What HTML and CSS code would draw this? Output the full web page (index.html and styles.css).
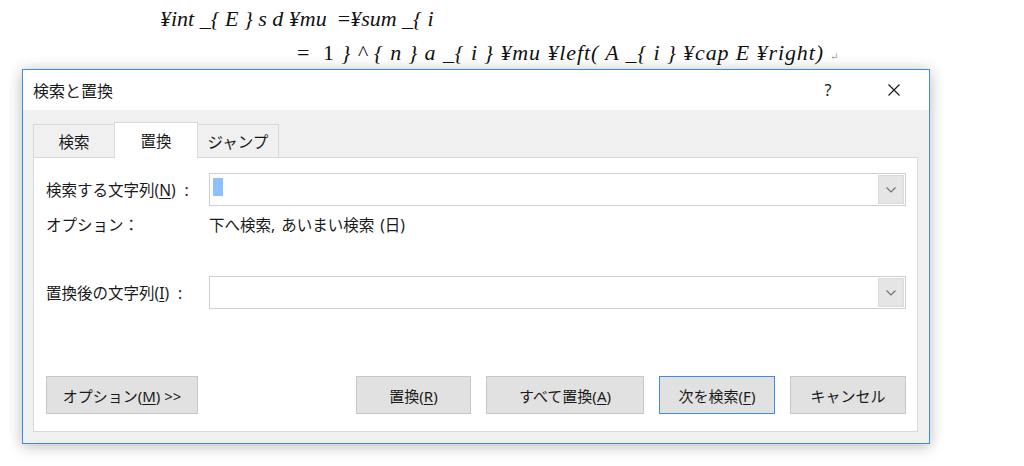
FILE: index.html
```html
<!DOCTYPE html>
<html lang="ja">
<head>
<meta charset="utf-8">
<title>検索と置換</title>
<link rel="stylesheet" href="styles.css">
</head>
<body>
<div class="doc">
  <p class="eq l1"><i>¥int _{ E } s d ¥mu</i>&nbsp; <span class="up">=</span><i>¥sum _{ i</i></p>
  <p class="eq l2"><span class="up">=&nbsp; 1</span> <i>} ^ { n } a _{ i } ¥mu ¥left( A _{ i } ¥cap E ¥right)</i><span class="pm">↵</span></p>
</div>
<div class="dialog">
  <div class="titlebar">
    <span class="title">検索と置換</span>
    <span class="help">?</span>
    <span class="close"><svg width="12" height="12" viewBox="0 0 12 12"><path d="M0.5 0.5L11.5 11.5M11.5 0.5L0.5 11.5" stroke="#1a1a1a" stroke-width="1.2" fill="none"/></svg></span>
  </div>
  <div class="body">
    <div class="tabs">
      <div class="tab">検索</div>
      <div class="tab active">置換</div>
      <div class="tab">ジャンプ</div>
    </div>
    <div class="panel">
      <div class="row">
        <span class="label">検索する文字列(<u>N</u>)<span class="colon">:</span></span>
        <div class="combo"><span class="sel"></span><span class="drop"><svg width="12" height="8" viewBox="0 0 12 8"><path d="M1.5 1.5L6 6L10.5 1.5" stroke="#707070" stroke-width="1.1" fill="none"/></svg></span></div>
      </div>
      <div class="row opts">
        <span class="label">オプション：</span>
        <span class="val">下へ検索, あいまい検索 (日)</span>
      </div>
      <div class="row repl">
        <span class="label">置換後の文字列(<u>I</u>)<span class="colon">:</span></span>
        <div class="combo"><span class="drop"><svg width="12" height="8" viewBox="0 0 12 8"><path d="M1.5 1.5L6 6L10.5 1.5" stroke="#707070" stroke-width="1.1" fill="none"/></svg></span></div>
      </div>
      <div class="buttons">
        <button class="btn more">オプション(<u>M</u>) &gt;&gt;</button>
        <div class="right">
          <button class="btn b1">置換(<u>R</u>)</button>
          <button class="btn b2">すべて置換(<u>A</u>)</button>
          <button class="btn b3 def">次を検索(<u>F</u>)</button>
          <button class="btn b4">キャンセル</button>
        </div>
      </div>
    </div>
  </div>
</div>
</body>
</html>
```
FILE: styles.css
```css
* { box-sizing: border-box; }
html, body { margin: 0; padding: 0; background: #fff; }
body { width: 1024px; height: 466px; overflow: hidden; }

.doc { height: 69px; padding-top: 2px; }
.eq {
  margin: 0;
  font-family: "Liberation Serif", "DejaVu Serif", serif;
  font-size: 22px;
  line-height: 34px;
  color: #111;
  white-space: nowrap;
}
.eq i { font-style: italic; }
.eq .up { font-style: normal; }
.l1 { padding-left: 160px; }
.l2 { padding-left: 297px; letter-spacing: 0.9px; }
.pm { font-size: 10px; color: #999; margin-left: 6px; font-style: normal; letter-spacing: 0; }

.dialog {
  margin-left: 22px;
  width: 908px;
  height: 375px;
  border: 1px solid #3d8ee0;
  background: #f0f0f0;
  box-shadow: 0 2px 14px rgba(0,0,0,0.28);
  font-family: "Noto Sans", "Noto Sans CJK JP", sans-serif;
  color: #1a1a1a;
  display: flex;
  flex-direction: column;
}
.titlebar {
  height: 40px;
  background: #fff;
  display: flex;
  align-items: center;
  padding-left: 10px;
  font-size: 16px;
}
.title { flex: 1; }
.help { width: 30px; font-size: 16px; margin-right: 45px; text-align: center; }
.close { width: 12px; margin-right: 29px; display: flex; }

.body { flex: 1; padding: 12px 11px 11px 10px; display: flex; flex-direction: column; }
.tabs { display: flex; height: 35px; align-items: flex-end; }
.tab {
  height: 34px;
  border: 1px solid #d9d9d9;
  border-bottom: none;
  background: #f0f0f0;
  font-size: 15.5px;
  display: flex;
  align-items: center;
  justify-content: center;
  margin-bottom: -1px;
}
.tab:nth-child(1) { width: 81px; border-right: none; }
.tab.active { width: 84px; height: 36px; background: #fff; position: relative; z-index: 1; padding-bottom: 1px; }
.tab:nth-child(3) { width: 81px; border-left: none; }

.panel {
  flex: 1;
  background: #fff;
  border: 1px solid #d9d9d9;
  padding: 15px 11px 17px 12px;
  display: flex;
  flex-direction: column;
  font-size: 15.5px;
}
.row { display: grid; grid-template-columns: 163px 1fr; align-items: center; }
.label { white-space: nowrap; }
.colon { margin-left: 9px; }
.val { word-spacing: 2px; }
.combo {
  height: 33px;
  border: 1px solid #cfcfcf;
  display: flex;
  align-items: stretch;
  justify-content: space-between;
  padding: 1px;
}
.sel { width: 10px; height: 18px; background: #8dc0ff; margin: 3px 0 0 2px; }
.drop {
  width: 26px;
  margin-left: auto;
  background: #e5e5e5;
  border: 1px solid #dadada;
  display: flex;
  align-items: center;
  justify-content: center;
}
.opts { height: 36px; }
.repl { margin-top: 34px; }

.buttons { margin-top: auto; display: flex; justify-content: space-between; }
.right { display: flex; gap: 15px; }
.btn {
  height: 38px;
  background: #e1e1e1;
  border: 1px solid #c8c8c8;
  font-family: "Noto Sans", "Noto Sans CJK JP", sans-serif;
  font-size: 15px;
  color: #1a1a1a;
  padding: 0;
}
.more { width: 152px; }
.b1 { width: 115px; }
.b2 { width: 158px; }
.b3 { width: 116px; border-color: #3d8ee0; }
.b4 { width: 116px; }
u { text-decoration-thickness: 1px; text-underline-offset: 2px; }
```
